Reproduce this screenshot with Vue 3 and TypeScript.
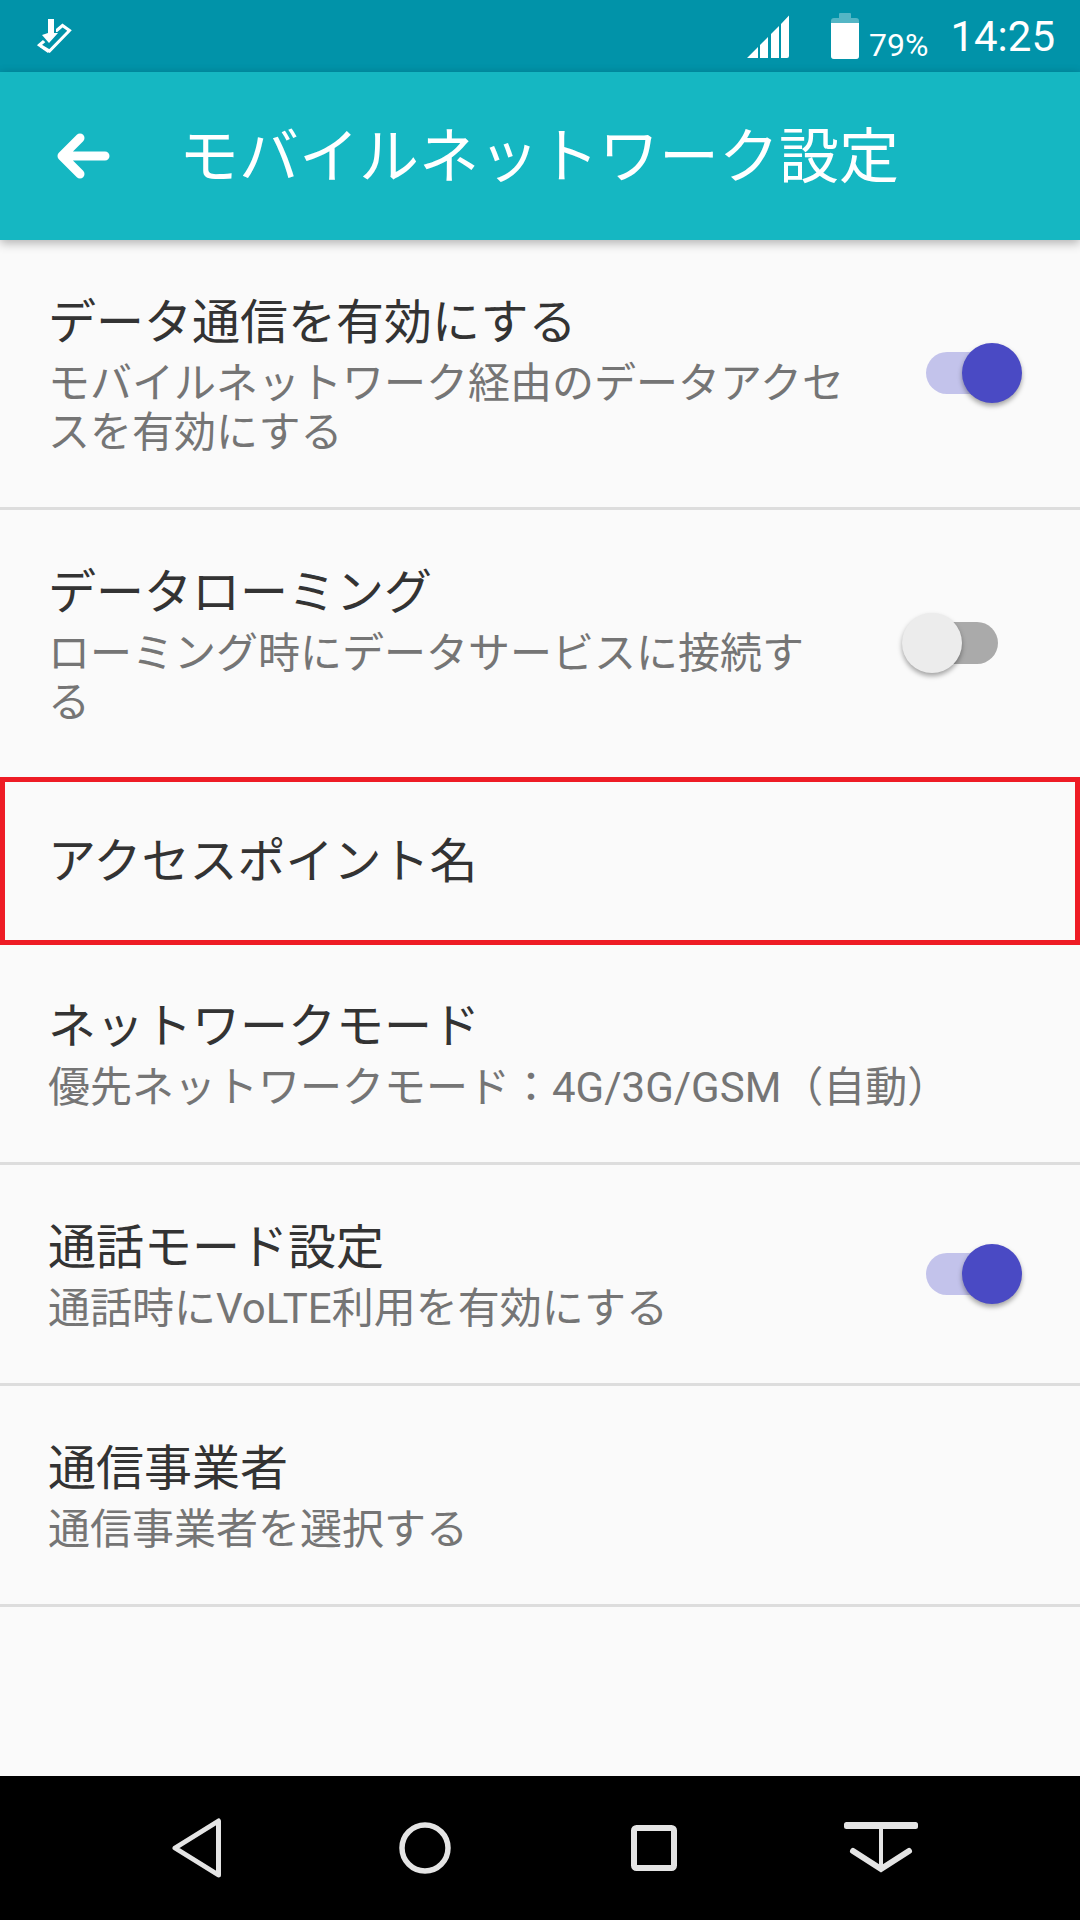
<script setup lang="ts">
interface Row {
  title: string
  sub?: string
  toggle?: boolean
  kind: string
}
const rows: Row[] = [
  { kind: 'r1', title: 'データ通信を有効にする', sub: 'モバイルネットワーク経由のデータアクセ\nスを有効にする', toggle: true },
  { kind: 'r2', title: 'データローミング', sub: 'ローミング時にデータサービスに接続す\nる', toggle: false },
  { kind: 'r3', title: 'アクセスポイント名' },
  { kind: 'r4', title: 'ネットワークモード', sub: '優先ネットワークモード：4G/3G/GSM（自動）' },
  { kind: 'r5', title: '通話モード設定', sub: '通話時にVoLTE利用を有効にする', toggle: true },
  { kind: 'r6', title: '通信事業者', sub: '通信事業者を選択する' },
]
</script>

<template>
  <div class="screen">
    <header class="status">
      <svg class="st-left" width="36" height="36" viewBox="36 18 36 36">
        <path d="M39.5 45L62.5 25.5L69.5 30.5L49.5 51Z" fill="none" stroke="#fff" stroke-width="3" stroke-linejoin="miter" />
        <path d="M38 46L50 50L48 53Z" fill="#fff" />
        <path d="M48 19H55V33H59L49 44L41 37L48 33Z" fill="#0193a9" stroke="#0193a9" stroke-width="2" />
        <path d="M48 19H54V33H58L49 43L42 35L48 33Z" fill="#fff" />
      </svg>
      <div class="st-right">
        <svg width="43" height="43" viewBox="0 0 43 43">
          <path d="M0 43L11 32V43ZM13 30L21 22V43H13ZM24 19L32 11V43H24ZM34 9L42 0.5V41a2 2 0 0 1-2 2H34Z" fill="#fff" />
        </svg>
        <svg class="batt" width="28" height="46" viewBox="0 0 28 46">
          <path d="M8 1a1 1 0 0 1 1-1h10a1 1 0 0 1 1 1v4h5a3 3 0 0 1 3 3v35a3 3 0 0 1-3 3H3a3 3 0 0 1-3-3V8a3 3 0 0 1 3-3h5z" fill="#fff" fill-opacity="0.33" />
          <path d="M0 10h28v33a3 3 0 0 1-3 3H3a3 3 0 0 1-3-3z" fill="#fff" />
        </svg>
        <span class="pct">79%</span>
        <span class="time">14:25</span>
      </div>
    </header>
    <div class="appbar">
      <svg class="back" width="54" height="46" viewBox="0 0 54 46">
        <path d="M24 5L6 23L24 41M6 23H49" fill="none" stroke="#fff" stroke-width="9" stroke-linecap="round" stroke-linejoin="round" />
      </svg>
      <span class="app-title">モバイルネットワーク設定</span>
    </div>
    <main class="list">
      <section v-for="r in rows" :key="r.kind" class="row" :class="r.kind">
        <div class="text">
          <div class="title">{{ r.title }}</div>
          <div v-if="r.sub" class="sub">{{ r.sub }}</div>
        </div>
        <div v-if="r.toggle !== undefined" class="switch" :class="{ on: r.toggle }">
          <span class="track"></span>
          <span class="thumb"></span>
        </div>
      </section>
    </main>
    <nav class="nav">
      <span class="cell">
        <svg width="52" height="60" viewBox="0 0 52 60">
          <path d="M48.5 3V57L5 30Z" fill="none" stroke="#e4e4e4" stroke-width="5" stroke-linejoin="round" />
        </svg>
      </span>
      <span class="cell">
        <svg width="52" height="52" viewBox="0 0 52 52">
          <circle cx="26" cy="26" r="23" fill="none" stroke="#e4e4e4" stroke-width="5.5" />
        </svg>
      </span>
      <span class="cell">
        <svg width="46" height="46" viewBox="0 0 46 46">
          <rect x="3" y="3" width="40" height="40" rx="2.5" fill="none" stroke="#e4e4e4" stroke-width="6" />
        </svg>
      </span>
      <span class="cell">
        <svg class="down" width="76" height="52" viewBox="0 0 76 52">
          <rect x="1" y="0" width="74" height="7" rx="2.5" fill="#e4e4e4" />
          <path d="M38 7V46" fill="none" stroke="#e4e4e4" stroke-width="4" />
          <path d="M10 29L38 47L66 29" fill="none" stroke="#e4e4e4" stroke-width="6" stroke-linecap="round" stroke-linejoin="miter" />
        </svg>
      </span>
    </nav>
  </div>
</template>

<style scoped>
.screen {
  width: 1080px;
  height: 1920px;
  display: flex;
  flex-direction: column;
  background: #fafafa;
  font-family: Roboto, "Noto Sans CJK JP", sans-serif;
  overflow: hidden;
}
.status {
  height: 72px;
  flex: none;
  background: #0193a9;
  display: flex;
  align-items: center;
  justify-content: space-between;
  padding: 0 25px 0 36px;
  color: #fff;
}
.st-right {
  display: flex;
  align-items: center;
}
.batt { margin-left: 41px; }
.pct {
  font-size: 32px;
  margin-left: 10px;
  margin-top: 17px;
  line-height: 40px;
}
.time {
  font-size: 42px;
  margin-left: 22px;
  margin-top: 2px;
  line-height: 50px;
}
.appbar {
  height: 168px;
  flex: none;
  background: #15b7c2;
  display: flex;
  align-items: center;
  padding-left: 56px;
  box-shadow: 0 3px 10px rgba(0, 0, 0, 0.3);
  position: relative;
  z-index: 1;
}
.app-title {
  color: #fff;
  font-size: 60px;
  line-height: 80px;
  margin-left: 69px;
  margin-top: 4px;
}
.list {
  flex: 1;
  display: flex;
  flex-direction: column;
}
.row {
  display: flex;
  align-items: center;
  justify-content: space-between;
  border-bottom: 3px solid #dddddd;
  padding-left: 48px;
  box-sizing: border-box;
  position: relative;
}
.r1 { height: 270px; }
.r2 { height: 267px; border-bottom: none; }
.r3 { height: 168px; border: 5px solid #ee1c25; padding-left: 43px; }
.r4 { height: 220px; }
.r5 { height: 221px; }
.r6 { height: 221px; }
.text { padding-top: 2px; }
.title {
  font-size: 48px;
  line-height: 60px;
  color: #333333;
}
.sub {
  font-size: 42px;
  line-height: 49px;
  margin-top: 6px;
  color: #757575;
  white-space: pre-line;
}
.switch {
  width: 120px;
  height: 60px;
  position: relative;
  flex: none;
  margin-right: 58px;
  margin-bottom: 1px;
}
.track {
  position: absolute;
  left: 24px;
  top: 9px;
  width: 72px;
  height: 42px;
  border-radius: 21px;
  background: #aaaaaa;
}
.thumb {
  position: absolute;
  left: 0;
  top: 0;
  width: 60px;
  height: 60px;
  border-radius: 50%;
  background: #ececec;
  box-shadow: 0 3px 5px rgba(0, 0, 0, 0.35);
}
.switch.on .track { background: #c3c3eb; }
.switch.on .thumb { left: 60px; background: #4a4ac4; }
.nav {
  height: 144px;
  flex: none;
  background: #000;
  display: flex;
  align-items: center;
  padding-left: 81px;
}
.cell {
  width: 229px;
  display: flex;
  justify-content: center;
  align-items: center;
}
.cell svg { display: block; }
.cell .down { margin-right: 3px; }
</style>
